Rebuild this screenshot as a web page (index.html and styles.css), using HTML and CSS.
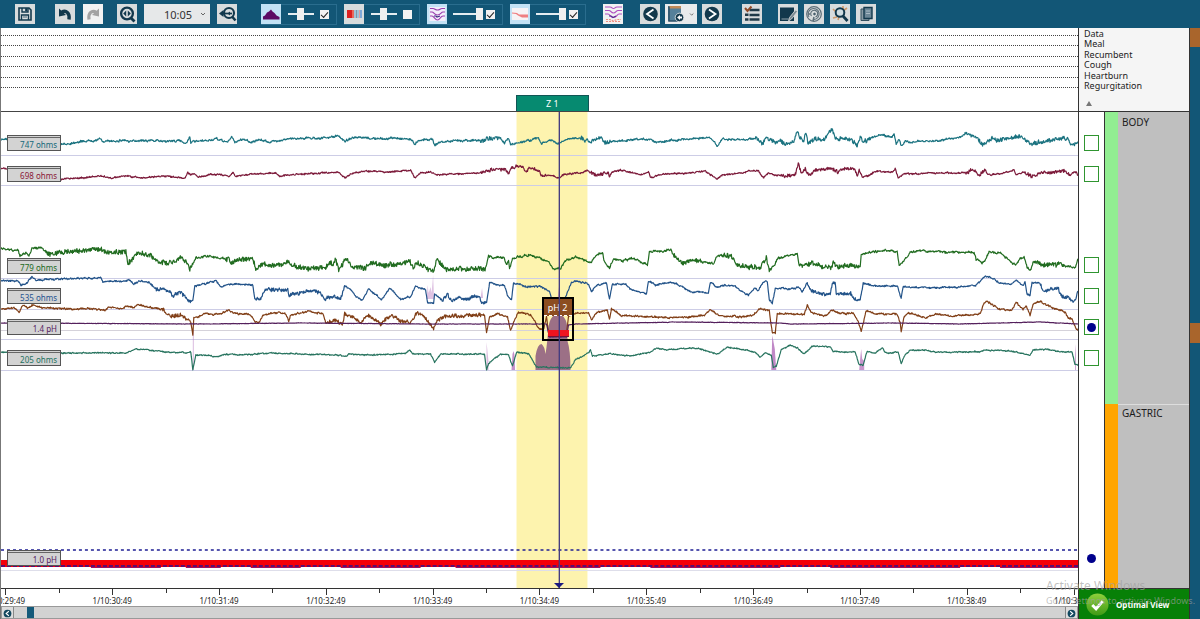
FILE: index.html
```html
<!DOCTYPE html>
<html lang="en">
<head>
<meta charset="utf-8">
<title>Impedance pH study</title>
<link rel="stylesheet" href="styles.css">
</head>
<body>
<header class="toolbar">
  <div class="group group--save">
    <button class="tool" aria-label="Save"><svg viewBox="0 0 20 20"><path d="M4 4h10l2 2v10H4z" fill="none" stroke="#12384c" stroke-width="1.6"/><path d="M7 4v4h6V4M6.500 16v-5h7v5" fill="none" stroke="#12384c" stroke-width="1.400"/><path d="M10.500 4.500h1.500v2.500h-1.500zM8 13h4" stroke="#12384c" fill="#12384c" stroke-width=".7"/></svg></button>
  </div>
  <div class="group group--history">
    <button class="tool" aria-label="Undo"><svg viewBox="0 0 20 20"><path d="M6.500 8.500C11 5.500 15 9 14 15.500" fill="none" stroke="#12384c" stroke-width="3.400"/><path d="M4 4.500v8l7-1.500z" fill="#12384c"/></svg></button>
    <button class="tool tool--light" aria-label="Redo"><svg viewBox="0 0 20 20"><path d="M13.500 8.500C9 5.500 5 9 6 15.500" fill="none" stroke="#a3a3a3" stroke-width="3.200"/><path d="M16 4.500v8L9 11z" fill="#a3a3a3"/></svg></button>
  </div>
  <div class="group group--zoom">
    <button class="tool" aria-label="Zoom in"><svg viewBox="0 0 20 20"><circle cx="10" cy="9.500" r="5.900" fill="none" stroke="#12384c" stroke-width="2.300"/><path d="M13.500 13.500l4 4" stroke="#12384c" stroke-width="2.800"/><path d="M6.200 9.500l3-3v6zM13.800 9.500l-3-3v6z" fill="#12384c"/></svg></button>
    <span class="timebox"><select class="timebox__select" aria-label="Time window"><option>10:05</option></select><svg class="timebox__arrow" viewBox="0 0 6 4"><path d="M1 1l2 2 2-2" fill="none" stroke="#666" stroke-width="1"/></svg></span>
    <button class="tool" aria-label="Zoom out"><svg viewBox="0 0 20 20"><circle cx="12" cy="9" r="5" fill="none" stroke="#12384c" stroke-width="2.100"/><path d="M15 12.500l3.500 4" stroke="#12384c" stroke-width="2.600"/><path d="M5 9.500h10" stroke="#12384c" stroke-width="1.700"/><path d="M2 9.500l4.500-3.500v7z" fill="#12384c"/><path d="M10.500 9.500l2.500-2v4z" fill="#12384c"/></svg></button>
  </div>
  <div class="group group--modes">
    <div class="mode">
      <button class="tool tool--on" aria-label="Reflux area"><svg viewBox="0 0 20 20"><path d="M2 15.500v-3l2-1 2-3 2-1 2-2 1.500 2 2 1.500 2 2.500 3 1.500v2.500z" fill="#5c0a63"/></svg></button>
      <input class="level level--short" type="range" value="50" aria-label="Reflux area level">
      <input class="tick" type="checkbox" checked aria-label="Show reflux area">
    </div>
    <div class="mode">
      <button class="tool" aria-label="Color contour"><svg viewBox="0 0 20 20"><rect x="3" y="6" width="15" height="8" fill="#9fc3d8"/><rect x="3" y="6" width="5" height="8" fill="#dc2020"/><rect x="8" y="6" width="2" height="8" fill="#e86a5c"/><rect x="12" y="6" width="1" height="8" fill="#7f95a6"/><rect x="15" y="6" width="1" height="8" fill="#e0a0a0"/><rect x="16" y="6" width="2" height="8" fill="#7fa8d8"/></svg></button>
      <input class="level level--short" type="range" value="50" aria-label="Color contour level">
      <input class="tick" type="checkbox" aria-label="Show color contour">
    </div>
    <div class="mode">
      <button class="tool tool--on" aria-label="Impedance lines"><svg viewBox="0 0 20 20" fill="none" stroke="#9b3fae" stroke-width="1.200"><path d="M2.500 3h16v14h-16z" fill="#f3eefa" stroke="none"/><path d="M3 4.500h3c2 0 2 1.500 4.500 1.500S13 4.500 15 4.500h3M3 8h2c2 0 2 3 5.500 3S14 8 16 8h2M3 12h2c2 0 3 4 5.500 4s3-4 5.500-4h2"/><path d="M7 12h2l1 1 3-1" stroke="#3d2a80"/></svg></button>
      <input class="level" type="range" value="100" aria-label="Impedance lines level">
      <input class="tick" type="checkbox" checked aria-label="Show impedance lines">
    </div>
    <div class="mode">
      <button class="tool tool--on" aria-label="pH lines"><svg viewBox="0 0 20 20"><path d="M2 4h16v12H2z" fill="#f7f3f5"/><path d="M2 8.500l5 .5 2 1.500h9v3h-6l-4-2-2-1.500-4-.5z" fill="#ef7f82"/></svg></button>
      <input class="level" type="range" value="100" aria-label="pH lines level">
      <input class="tick" type="checkbox" checked aria-label="Show pH lines">
    </div>
  </div>
  <div class="group group--single">
    <button class="tool tool--light" aria-label="Line overview"><svg viewBox="0 0 20 20" fill="none" stroke="#b04fc0" stroke-width="1.200"><path d="M2 3h5c2 0 2 1.500 3.500 1.500S12 3 14 3h5M2 6.500h4c2 0 2 2.500 4.500 2.500S13 6.500 15 6.500h4M2 10h3c2 0 2 3.500 5.500 3.500S14 10 16 10h3"/><path d="M6 12h2l2 1.500 3-1.500" stroke="#5a2a90"/><path d="M3 15.500h4l3 1.500 4-1.500h4M3 17.500h15" stroke="#ef8d80" stroke-dasharray="2 1"/></svg></button>
  </div>
  <div class="group group--events">
    <button class="tool" aria-label="Previous event"><svg viewBox="0 0 20 20"><circle cx="10.500" cy="10" r="7.300" fill="#12384c"/><path d="M13.500 5.500L7 10l6.500 4.500" fill="none" stroke="#fff" stroke-width="1.800"/></svg></button>
    <button class="tool tool--wide" aria-label="Event type"><svg viewBox="0 0 32 20"><rect x="3" y="2" width="13" height="15" fill="#55809a"/><rect x="4" y="2" width="12" height="2.500" fill="#c08a58"/><path d="M4 2.500v14.500h9" fill="none" stroke="#2c5268" stroke-width="1.500"/><circle cx="14.500" cy="13.500" r="4.300" fill="#12384c" stroke="#eee" stroke-width=".8"/><path d="M12 13.500l3-2.500v1.500h2v2h-2v1.500z" fill="#fff"/><path d="M25 9.500l1.700 1.700 1.700-1.700" fill="none" stroke="#777"/></svg></button>
    <button class="tool" aria-label="Next event"><svg viewBox="0 0 20 20"><circle cx="10" cy="10" r="7.300" fill="#12384c"/><path d="M7 5.500l6.500 4.500L7 14.500" fill="none" stroke="#fff" stroke-width="1.800"/></svg></button>
  </div>
  <div class="group group--list">
    <button class="tool" aria-label="Event list"><svg viewBox="0 0 20 20"><path d="M7.500 6h10M7.500 11h10M7.500 15.500h10" stroke="#1f3a48" stroke-width="2.400"/><path d="M3 9.500h3.500v2.500H3zM3 14.300h3.500v2.500H3z" fill="#1f3a48"/><path d="M3 4l2.500 3L9.500 2.500" fill="none" stroke="#8f4a28" stroke-width="2"/></svg></button>
  </div>
  <div class="group group--reports">
    <button class="tool" aria-label="Notes"><svg viewBox="0 0 20 20"><path d="M2 3.500h14v13.500h-14z" fill="#12384c"/><path d="M3.500 15h7" stroke="#8fa0a8"/><path d="M10.500 17l1-3.500 6-7.500 2 1.500-6 7.500z" fill="#7b8a92" stroke="#dcdcdc" stroke-width=".8"/></svg></button>
    <button class="tool" aria-label="Settings"><svg viewBox="0 0 20 20" fill="none" stroke="#5a6c76"><circle cx="10" cy="10" r="7.300" stroke-width="1.200"/><path d="M5 13a5.500 5.500 0 1 1 5 2.500M7.500 12a3.500 3.500 0 1 1 4 1" stroke-width="1.100"/><circle cx="10.500" cy="10" r=".9" fill="#12384c"/><path d="M4 10h2M9 17l1-4" stroke-width="1.500"/></svg></button>
    <button class="tool" aria-label="Find events"><svg viewBox="0 0 20 20"><path d="M3 5l3 3M13 2v3M3 14l4-1M17 4l-4 3M8 16l1-3" stroke="#d09a6a" stroke-width="1.600"/><circle cx="10" cy="8.500" r="4.300" fill="#cfdde2" stroke="#12384c" stroke-width="2"/><path d="M13 12l4.500 5" stroke="#12384c" stroke-width="2.800"/></svg></button>
    <button class="tool" aria-label="Copy report"><svg viewBox="0 0 20 20"><path d="M5 5h8v11.500H5z" fill="#8a9aa4" stroke="#33505f"/><path d="M8 3.500h8v11H8z" fill="#6d8797" stroke="#12384c" stroke-width="1.400"/><path d="M10 7h4M10 9.500h4" stroke="#a9bac4"/></svg></button>
  </div>
</header>

<main class="study">
  <section class="plot" aria-label="Study traces">
    <div class="lanes">
      <div class="lanes__rows"><i class="lane"></i><i class="lane"></i><i class="lane"></i><i class="lane"></i><i class="lane"></i><i class="lane"></i></div>
      <button class="zone-tag">Z 1</button>
    </div>
    <div class="traces">
      <svg class="traces__svg" id="traces" viewBox="0 112 1078 476" preserveAspectRatio="none">
        <rect x="516" y="112" width="71" height="476" fill="#fdf3ae"/>
        <g stroke="#cdcde6"><path d="M0 155.500H1078M0 185.500H1078M0 278.500H1078M0 309.500H1078M0 339.500H1078M0 370.500H1078"/><path d="M0 330.500H1078" stroke="#d5d2da"/><path d="M0 570.500H1078" stroke="#dedeea"/></g>
        <g fill="#b06ab8">
          <path d="M192 330h1v40h-1z" opacity=".45"/>
          <path d="M426 299l1-14 1 8 2-6 1 6 1.500-18 1 24z" opacity=".4"/>
          <path d="M486 370v-28l2 20v8zM480 298l1.500-10 1 10z" opacity=".45"/>
          <path d="M511 370l1-16 1-3 1 4 .5 15z" opacity=".75"/>
          <path d="M771 370l1-35 2.500 14 1.500 21z" opacity=".8"/>
          <path d="M859 370l1-12 1-9 1 10 2 2v9z" opacity=".7"/>
          <path d="M557 300l1.500-13 1.500 13zM1075 370v-26l1 10v16z" opacity=".6"/>
        </g>
        <path d="M535 370V356Q537 344 541 344Q544 346 545 354Q547 342 548 326Q550 317 554 315L558 298L561 315Q566 318 567 328V341Q570 350 570 370Z" fill="#9c7086"/>
        <rect x="0" y="560" width="1078" height="7" fill="#f40008"/>
        <path d="M0 550H1078" stroke="#1e1e94" stroke-width="1.400" stroke-dasharray="3 3"/>
        <path d="M90 567.500H160M185 567.500H220M250 567.500H300M340 567.500H420M455 567.500H600M650 567.500H780M830 567.500H960M1000 567.500H1078" stroke="#a01060"/>
        <path d="M0 566H1078" stroke="#2c1090" stroke-width="1.600" stroke-dasharray="4 2"/>
      </svg>
      <output class="chip chip--1">747 ohms</output>
      <output class="chip chip--2">698 ohms</output>
      <output class="chip chip--3">779 ohms</output>
      <output class="chip chip--4">535 ohms</output>
      <output class="chip chip--5">1.4 pH</output>
      <output class="chip chip--6">205 ohms</output>
      <output class="chip chip--7">1.0 pH</output>
      <div class="episode"><span class="episode__name">pH 2</span><i class="episode__acid"></i></div>
      <i class="cursor"></i>
    </div>
    <div class="axis">
      <div class="axis__scale">
        <span>1/10:29:49</span><span>1/10:30:49</span><span>1/10:31:49</span><span>1/10:32:49</span><span>1/10:33:49</span><span>1/10:34:49</span><span>1/10:35:49</span><span>1/10:36:49</span><span>1/10:37:49</span><span>1/10:38:49</span><span>1/10:39:49</span>
      </div>
    </div>
    <div class="scroller">
      <button class="scroller__step" aria-label="Scroll left"><svg viewBox="0 0 10 10"><circle cx="5" cy="5" r="4.300" fill="#12485f"/><path d="M6.500 2.500L3.500 5l3 2.500" fill="none" stroke="#fff" stroke-width="1.200"/></svg></button>
      <div class="scroller__track"><button class="scroller__thumb" aria-label="Visible range"></button></div>
      <button class="scroller__step" aria-label="Scroll right"><svg viewBox="0 0 10 10"><circle cx="5" cy="5" r="4.300" fill="#12485f"/><path d="M3.500 2.500l3 2.500-3 2.500" fill="none" stroke="#fff" stroke-width="1.200"/></svg></button>
    </div>
  </section>

  <aside class="side">
    <div class="legend">
      <ul class="legend__list"><li>Data</li><li>Meal</li><li>Recumbent</li><li>Cough</li><li>Heartburn</li><li>Regurgitation</li></ul>
      <button class="legend__fold" aria-label="Collapse lanes"><svg viewBox="0 0 6 5"><path d="M0 5l3-5 3 5z" fill="#777"/></svg></button>
    </div>
    <div class="channels">
      <div class="picks">
        <div class="picks__set"><input class="pick" type="checkbox" aria-label="Channel 1"><input class="pick" type="checkbox" aria-label="Channel 2"></div>
        <div class="picks__set"><input class="pick" type="checkbox" aria-label="Channel 3"><input class="pick" type="checkbox" aria-label="Channel 4"><input class="pick" type="checkbox" checked aria-label="pH 1"><input class="pick" type="checkbox" aria-label="Channel 5"></div>
        <input class="pick pick--bare" type="checkbox" checked aria-label="pH 2">
      </div>
      <div class="regions">
        <h2 class="region region--body">BODY</h2>
        <h2 class="region region--gastric">GASTRIC</h2>
      </div>
    </div>
    <button class="optimal">
      <svg class="optimal__icon" viewBox="0 0 24 24"><defs><linearGradient id="ball" x1="0" y1="0" x2="0" y2="1"><stop offset="0" stop-color="#8fd03c"/><stop offset="1" stop-color="#3f9a16"/></linearGradient></defs><circle cx="12" cy="12" r="11.500" fill="url(#ball)"/><path d="M6.500 12.500l4 4 7-8" fill="none" stroke="#fff" stroke-width="3"/></svg>
      <span>Optimal View</span>
    </button>
  </aside>
  <div class="overview" aria-label="Overview"><i class="overview__mark"></i><i class="overview__mark"></i></div>
  <div class="watermark"><p class="watermark__title">Activate Windows</p><p class="watermark__hint">Go to Settings to activate Windows.</p></div>
</main>
<script src="traces.js"></script>
</body>
</html>
```
FILE: styles.css
```css
* { box-sizing: border-box; }
body { margin: 0; min-height: 100vh; display: flex; flex-direction: column; background: #fff; color: #1c1c1c; font-family: "Noto Sans", "Open Sans", sans-serif; font-size: 9px; }
button { margin: 0; padding: 0; border: 0; font: inherit; color: inherit; cursor: pointer; }
svg { display: block; }
i { display: block; }

.toolbar { display: flex; align-items: center; height: 28px; padding-left: 15px; background: #125676; flex: none; }
.group { display: flex; align-items: center; gap: 6px; }
.group--save { margin-right: 20px; }
.group--history { gap: 8px; margin-right: 14px; }
.group--zoom { gap: 7px; margin-right: 24px; }
.group--modes { gap: 7px; margin-right: 17px; }
.group--single { margin-right: 17px; }
.group--events { gap: 5px; margin-right: 20px; }
.group--list { margin-right: 16px; }
.tool { width: 20px; height: 20px; background: #d8dcdd; }
.tool--light { background: #f1f2f2; }
.tool--on { background: #c3e2f5; }
.tool--wide { width: 32px; background: #e8ebec; }
.timebox { position: relative; width: 66px; height: 20px; }
.timebox__select { width: 100%; height: 100%; padding: 0 0 0 20px; border: 0; border-radius: 0; appearance: none; background: #e6e8e9; color: #333; font: 11px "Noto Sans", sans-serif; }
.timebox__arrow { position: absolute; right: 4px; top: 8px; width: 6px; height: 4px; }
.mode { display: flex; align-items: center; justify-content: space-between; width: 76px; height: 21px; padding-right: 7px; border: solid #2a6d8e; border-width: 1px 1px 1px 0; }
.level { appearance: none; width: 30px; height: 12px; margin: 0 -2px 0 0; background: linear-gradient(#e5edf1, #e5edf1) center / 100% 2px no-repeat; }
.level--short { width: 26px; margin: 0; }
.level::-webkit-slider-thumb { appearance: none; width: 7px; height: 12px; background: #f0f0f0; }
.tick { appearance: none; width: 9px; height: 9px; margin: 0; background: #f2f2f2; display: grid; place-items: center; }
.tick:checked::after { content: ""; width: 6px; height: 3px; border: solid #222; border-width: 0 0 1px 1px; rotate: -48deg; }

.study { position: relative; flex: 1; display: flex; align-items: stretch; }
.plot { flex: 1; min-width: 0; display: flex; flex-direction: column; border-left: 1px solid #777; }
.lanes { position: relative; height: 84px; padding-top: 7px; border-bottom: 1px solid #444; }
.lanes__rows { display: flex; flex-direction: column; justify-content: space-between; height: 53px; }
.lane { border-top: 1px dotted #444; }
.zone-tag { position: absolute; left: 47.8%; bottom: 0; width: 73px; height: 16px; border: 1px solid #155; border-bottom: 0; background: #068a70; color: #fff; font-size: 9px; }

.traces { position: relative; }
.traces__svg { width: 100%; height: 476px; }
.trace { fill: none; stroke-width: 1.2; stroke-linejoin: round; }
.chip { position: absolute; left: 6px; width: 54px; height: 16px; padding-right: 3px; border: 1px solid #555; background: #d3d3d3; box-shadow: inset 0 1px #d3d3d3, inset 0 2px #666; text-align: right; font-size: 8px; line-height: 17px; }
.chip--1 { top: 23px; color: #14687a; }
.chip--2 { top: 54px; color: #8a1838; }
.chip--3 { top: 146px; color: #1c6a1c; }
.chip--4 { top: 176px; color: #235290; }
.chip--5 { top: 207px; color: #55215f; }
.chip--6 { top: 238px; color: #227060; }
.chip--7 { top: 438px; color: #55215f; }
.episode { position: absolute; left: 50.2%; top: 185px; width: 32px; height: 44px; border: 2px solid #000; }
.episode__name { display: block; height: 17px; border-bottom: 1px dashed #fff; background: #8c4d20; color: #fff; font-size: 9px; line-height: 17px; text-align: center; }
.episode__acid { height: 7px; margin: 14px 3px 0 4px; background: #ef1420; border-bottom: 1px solid #771038; }
.cursor { position: absolute; left: 51.8%; top: 0; bottom: 0; width: 1px; background: #4a4484; }
.cursor::before { content: ""; position: absolute; inset: 0 0 0 -1px; background: #38307c55; }
.cursor::after { content: ""; position: absolute; bottom: 0; left: -5px; border: solid transparent; border-width: 5px 5px 0; border-top-color: #1c1c80; }

.axis { flex: 1; min-height: 18px; border-top: 1px solid #333; overflow: hidden; }
.axis__scale { display: grid; grid-template-columns: repeat(11, 1fr); width: 109.1%; margin-left: -49px; }
.axis__scale span { position: relative; padding-top: 6px; font-size: 8px; line-height: 11px; text-align: center; }
.axis__scale span::before, .axis__scale span::after { content: ""; position: absolute; top: 0; left: 50%; width: 1px; height: 6px; background: #333; }
.axis__scale span::after { left: 100%; height: 4px; }
.scroller { display: flex; height: 13px; border: 1px solid #999; background: #d2d2d2; }
.scroller__step { width: 11px; padding: 1px 0 0 1px; background: #ddd; }
.scroller__step svg { width: 9px; height: 9px; }
.scroller__track { flex: 1; padding-left: 13px; display: flex; border: solid #888; border-width: 0 1px; }
.scroller__thumb { width: 7px; background: #145a7a; }

.side { width: 112px; display: flex; flex-direction: column; border: solid #333; border-width: 0 1px; }
.legend { height: 84px; padding: 1px 0 0 5px; background: #f5f5f5; border-bottom: 1px solid #333; }
.legend__list { display: flex; flex-direction: column; justify-content: space-between; height: 62px; margin: 0; padding: 0; list-style: none; font: 9px/10px "Noto Sans", sans-serif; }
.legend__fold { display: block; margin: 10px 0 0 2px; background: none; }
.legend__fold svg { width: 6px; height: 5px; }
.channels { display: flex; flex: 1; }
.picks { width: 25px; display: flex; flex-direction: column; align-items: center; padding-top: 23px; background: #fff; }
.picks__set { display: flex; flex-direction: column; gap: 15px; }
.picks__set + .picks__set { margin-top: 75px; }
.pick { appearance: none; width: 15px; height: 16px; margin: 0; border: 1px solid #2f9530; display: grid; place-items: center; }
.pick:checked::after { content: ""; width: 9px; height: 9px; border-radius: 50%; background: #00008c; }
.pick--bare { margin-top: 184px; border-color: transparent; }
.regions { flex: 1; display: flex; flex-direction: column; border-left: 1px solid #333; }
.region { margin: 0; padding: 4px 0 0 4px; border-left: 13px solid #92ee92; background: #bfbfbf; font-size: 10px; font-weight: 400; line-height: 13px; }
.region--body { height: 292px; }
.region--gastric { flex: 1; padding-top: 3px; border-left-color: #ffa500; box-shadow: inset 0 1px #ddd; }
.optimal { display: flex; align-items: center; gap: 7px; height: 31px; padding-left: 7px; border-top: 1px solid #333; background: #078007; color: #fff; font-size: 8px; font-weight: 700; }
.optimal__icon { width: 23px; height: 23px; }
.overview { width: 10px; background: #125676; }
.overview__mark { height: 19px; background: #a9652c; }
.overview__mark + .overview__mark { height: 20px; margin-top: 276px; }
.watermark { position: absolute; right: 0; bottom: 12px; width: 154px; color: #a0a0a0a8; pointer-events: none; white-space: nowrap; }
.watermark p { margin: 0; }
.watermark__title { font-size: 12px; line-height: 16px; }
.watermark__hint { font-size: 9px; line-height: 13px; }
```
FILE: traces.js
```js
// Each trace: colour, noise amplitude, and "x,y" samples joined by seeded noise.
const TRACES = [
  { color: '#1b7380', noise: 1.7, busy: [[480, 500], [580, 610], [755, 870], [965, 1078]], points: '0,140 7,138 30,141 60,145 75,142 95,140 100,139 103,142 110,141 125,140 128,142 140,140 160,141 180,141 185,143 188,139 189,136 190,142 205,141 215,139 227,142 231,137 234,142 243,139 250,142 260,140 270,142 280,140 288,139 300,138 325,138 337,136 345,141 350,138 365,138 380,139 395,138 410,139 414,144 418,140 432,139 434,145 440,142 465,140 484,141 486,138 500,139 504,143 508,138 510,145 520,142 530,140 538,138 541,144 550,140 558,144 565,140 575,138 580,137 585,140 592,141 600,136 604,142 610,142 620,141 650,139 655,142 675,140 700,138 710,138 717,146 722,139 740,140 757,138 762,144 766,139 775,142 780,140 785,145 794,141 797,131 800,138 803,141 806,134 808,145 815,138 822,140 828,134 832,130 836,139 845,138 855,142 857,146 860,136 863,142 870,138 880,135 892,137 894,133 896,144 899,139 901,146 905,142 935,141 955,138 968,134 972,137 975,135 980,142 982,145 990,139 993,136 996,141 1010,138 1020,137 1027,142 1033,144 1045,141 1060,138 1068,139 1071,144 1078,143' },
  { color: '#7c1a3a', noise: 1.3, busy: [[480, 545], [585, 610], [780, 860], [965, 985], [1020, 1078]], points: '0,169 5,168 7,171 30,174 60,179 80,178 100,176 110,178 125,176 140,178 160,176 184,178 187,173 190,175 193,173 197,177 205,176 210,174 225,175 228,177 232,172 235,176 250,174 275,173 279,176 300,174 325,173 337,172 344,178 352,173 365,171 390,172 410,170 414,178 420,173 430,172 436,175 450,174 480,173 487,171 493,169 505,170 508,174 511,168 522,166 525,171 530,168 538,170 541,176 550,175 558,178 565,174 580,173 587,171 595,175 608,173 609,177 612,172 620,170 640,175 648,172 650,177 665,174 690,173 705,171 712,176 717,179 722,175 740,173 757,170 763,178 768,173 775,175 785,176 795,174 798,163 801,173 805,168 809,176 815,170 830,168 838,172 845,168 855,170 857,176 859,170 862,177 868,176 875,171 893,172 895,169 898,178 905,173 912,174 940,173 968,173 970,170 976,171 979,176 985,170 988,175 1000,174 1014,170 1016,175 1020,173 1025,172 1032,177 1040,173 1065,171 1071,176 1074,171 1078,174' },
  { color: '#216c20', noise: 1.9, busy: [[45, 190], [225, 485], [670, 700], [722, 770], [800, 860], [1035, 1065]], points: '0,249 17,250 19,256 25,253 28,255 31,248 40,248 50,254 60,252 80,251 100,249 105,252 125,252 127,264 131,260 136,253 150,255 156,262 170,263 180,257 185,262 189,270 195,258 205,256 228,259 231,264 235,260 252,258 255,269 262,264 275,266 287,261 297,268 325,268 329,261 332,265 335,260 338,270 345,259 352,267 365,268 370,263 385,266 409,261 413,269 416,262 428,270 433,271 436,260 445,269 485,269 488,257 503,257 506,265 508,260 509,269 512,258 530,255 540,259 548,262 553,269 560,269 566,260 575,257 585,261 590,263 596,255 602,253 604,262 609,268 613,259 622,261 632,258 645,264 647,265 649,252 660,251 670,250 676,259 682,264 690,261 700,261 709,263 713,264 716,257 723,255 731,256 738,265 745,266 755,267 760,269 762,263 766,258 769,271 774,265 778,258 790,255 797,254 799,266 812,263 824,267 831,267 833,262 838,267 850,265 860,268 861,254 870,252 885,251 897,251 899,266 902,263 910,253 920,251 950,252 965,253 974,252 976,259 982,263 986,258 989,252 1001,253 1008,260 1016,265 1020,258 1024,257 1027,267 1031,270 1033,261 1042,265 1060,264 1075,268 1078,259' },
  { color: '#225389', noise: 1.4, busy: [[155, 190], [255, 345], [440, 485], [810, 855], [1040, 1075]], points: '0,280 17,281 20,285 26,283 31,277 35,280 60,279 80,278 100,278 102,282 125,281 128,279 133,284 138,281 148,282 155,289 165,290 169,291 171,296 180,292 189,302 192,300 194,286 205,284 215,281 220,287 228,284 252,285 254,300 260,298 265,289 285,290 287,288 288,295 300,293 310,290 320,293 323,299 333,296 340,298 344,287 350,289 355,296 362,300 368,289 378,297 381,300 389,288 400,299 410,297 415,286 425,290 427,302 433,303 434,294 442,300 447,295 452,302 458,297 465,299 478,296 481,303 486,303 489,283 500,285 504,285 507,296 511,299 513,283 525,286 540,287 549,291 552,303 562,303 568,290 571,282 577,281 588,284 591,292 595,286 603,283 606,283 609,299 612,284 625,284 630,289 646,294 648,281 652,282 655,285 665,283 675,283 690,292 702,292 708,293 710,282 716,287 725,285 735,286 740,291 748,295 755,288 758,291 762,283 767,281 769,300 772,303 775,288 790,289 799,287 802,292 807,283 810,290 820,294 830,294 832,283 835,284 836,294 850,293 856,300 860,300 863,283 873,286 897,286 901,298 903,287 925,288 960,287 975,286 978,283 985,276 990,277 1000,283 1012,284 1016,280 1023,286 1025,282 1027,294 1030,295 1032,283 1040,283 1043,291 1058,288 1062,297 1068,297 1072,301 1075,301 1078,290' },
  { color: '#813f17', noise: 1.5, busy: [[158, 190], [325, 480]], points: '0,309 13,308 18,312 22,305 27,308 32,305 40,308 70,309 100,309 104,311 108,307 120,309 127,306 133,308 137,304 150,308 158,308 165,312 170,317 180,315 190,322 192,335 193,318 205,313 212,315 220,313 228,310 232,313 250,315 254,322 258,323 262,315 277,312 285,314 288,321 290,315 308,311 313,313 322,313 325,323 335,320 342,324 344,314 350,316 360,322 368,315 380,324 390,315 400,321 410,323 416,313 423,316 428,322 433,330 437,320 443,317 450,315 460,316 480,315 484,315 486,333 489,317 497,314 507,317 510,331 514,320 518,312 530,315 538,328 543,329 546,317 548,333 566,333 568,316 572,314 580,313 588,313 591,320 597,312 607,310 609,320 611,309 622,316 640,316 665,318 690,317 705,315 710,310 720,316 740,317 752,316 760,309 769,311 772,332 775,333 777,314 790,314 804,314 807,305 811,313 825,316 832,310 840,314 853,313 858,322 861,331 866,310 875,314 897,314 900,322 901,332 904,316 908,313 925,318 935,314 950,316 980,314 983,305 986,301 990,303 1000,309 1012,310 1016,302 1023,310 1026,306 1030,315 1033,304 1040,301 1050,307 1065,312 1068,318 1072,319 1076,329 1078,330' },
  { color: '#54205c', noise: 0.3, busy: [], points: '0,323 200,324 300,323 430,324 540,324 546,324 549,337 566,337 568,325 575,324 680,322 780,323 790,324 900,323 960,324 1040,322 1078,324' },
  { color: '#28745f', noise: 1, busy: [], points: '0,352 60,353 125,353 135,349 150,350 165,352 185,353 190,352 192,370 195,355 210,356 215,357 225,354 240,355 270,353 300,354 335,355 346,356 348,354 370,355 395,354 405,353 409,350 412,354 430,354 434,362 440,354 484,354 486,370 488,364 492,360 500,354 508,355 512,366 516,352 528,354 536,367 570,368 575,360 582,356 588,353 590,350 592,356 610,354 630,356 650,352 656,348 665,350 690,348 700,349 717,354 727,347 740,349 755,352 760,357 765,353 771,355 773,367 776,366 781,350 790,345 797,348 804,354 812,346 830,347 833,352 855,352 859,365 863,365 867,351 875,353 882,348 885,353 898,352 901,364 904,356 910,350 925,350 935,352 950,352 980,352 985,350 1010,351 1030,355 1033,350 1045,349 1060,352 1072,352 1075,364 1078,365' }
];

let seed = 7;
function random() {
  seed = (seed * 16807) % 2147483647;
  return seed / 2147483647 - 0.5;
}

// Busy spans get a sharper, taller jitter than the rest of the line.
function buildPath({ points, noise, busy }) {
  const samples = points.split(' ').map(pair => pair.split(',').map(Number));
  let path = `M${samples[0]}`;
  let drift = 0;
  for (let i = 1; i < samples.length; i++) {
    const [x0, y0] = samples[i - 1];
    const [x1, y1] = samples[i];
    for (let x = x0 + 0.5; x <= x1; x += 0.5) {
      const jitter = noise * (busy.some(([from, to]) => x >= from && x <= to) ? 2.4 : 0.9);
      drift = drift * 0.7 + random() * noise * 0.6;
      const y = y0 + (y1 - y0) * (x - x0) / (x1 - x0) + drift + random() * jitter;
      path += `L${x} ${y.toFixed(1)}`;
    }
  }
  return path;
}

const svg = document.getElementById('traces');
for (const trace of TRACES) {
  const path = document.createElementNS('http://www.w3.org/2000/svg', 'path');
  path.setAttribute('class', 'trace');
  path.setAttribute('stroke', trace.color);
  path.setAttribute('d', buildPath(trace));
  svg.append(path);
}
```
